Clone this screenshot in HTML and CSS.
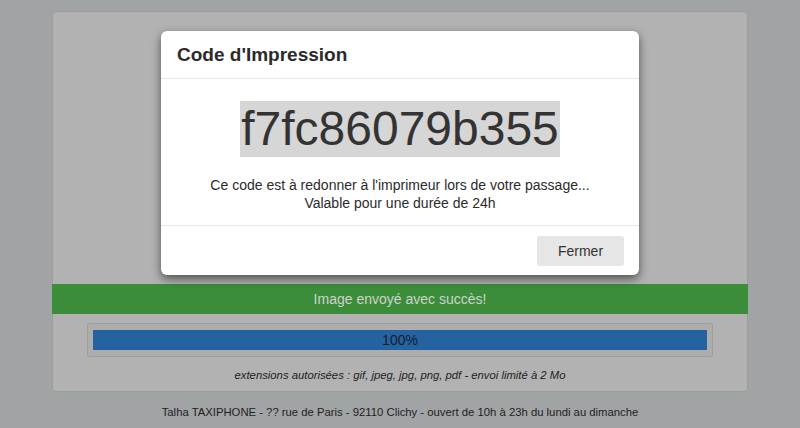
FILE: index.html
```html
<!DOCTYPE html>
<html lang="fr">
<head>
<meta charset="utf-8">
<title>Print2Net</title>
<link rel="stylesheet" href="styles.css">
</head>
<body>
<div class="page">
  <div class="card">
    <div class="card-top"></div>
    <div class="alert">Image envoyé avec succès!</div>
    <div class="progress">
      <div class="progress-bar">100%</div>
    </div>
    <p class="note">extensions autorisées : gif, jpeg, jpg, png, pdf - envoi limité à 2 Mo</p>
  </div>
  <p class="footer">Talha TAXIPHONE - ?? rue de Paris - 92110 Clichy - ouvert de 10h à 23h du lundi au dimanche</p>
</div>

<div class="modal">
  <div class="modal-header">
    <h4 class="modal-title">Code d'Impression</h4>
  </div>
  <div class="modal-body">
    <div class="code"><span class="code-sel">f7fc86079b355</span></div>
    <p class="desc">Ce code est à redonner à l'imprimeur lors de votre passage...<br>Valable pour une durée de 24h</p>
  </div>
  <div class="modal-footer">
    <button class="btn">Fermer</button>
  </div>
</div>
</body>
</html>
```

FILE: styles.css
```css
* { box-sizing: border-box; }
html, body { margin: 0; padding: 0; }
body {
  background: #a1a4a5;
  font-family: "Liberation Sans", Arial, sans-serif;
  color: #333;
  width: 800px;
  height: 428px;
  overflow: hidden;
}
.page {
  padding-top: 11px;
  display: flex;
  flex-direction: column;
  align-items: center;
}
.card {
  width: 696px;
  background: #b2b2b2;
  border: 1px solid #9d9d9d;
  border-radius: 4px;
  display: flex;
  flex-direction: column;
  align-items: center;
  padding-bottom: 8px;
}
.card-top { height: 272px; width: 100%; }
.alert {
  width: calc(100% + 2px);
  margin: 0 -1px;
  height: 30px;
  background: #3c8d3a;
  color: #cdd3cc;
  font-size: 14px;
  display: flex;
  align-items: center;
  justify-content: center;
}
.progress {
  margin-top: 9px;
  width: 626px;
  height: 34px;
  border: 1px solid #9f9f9f;
  border-radius: 3px;
  background: #adadad;
  padding: 6px 5px 6px 5px;
}
.progress-bar {
  height: 20px;
  background: #2463a0;
  color: #15202c;
  font-size: 14px;
  line-height: 20px;
  text-align: center;
}
.note {
  margin: 10px 0 0;
  font-size: 11.3px;
  font-style: italic;
  color: #1e1e1e;
  line-height: 16px;
}
.footer {
  margin: 12px 0 0;
  font-size: 11.3px;
  color: #1e1e1e;
  line-height: 16px;
}

.modal {
  position: absolute;
  left: 161px;
  top: 31px;
  width: 478px;
  height: 244px;
  background: #fff;
  border-radius: 6px;
  box-shadow: 0 4px 10px rgba(0,0,0,0.55);
  display: flex;
  flex-direction: column;
}
.modal-header {
  height: 48px;
  border-bottom: 1px solid #e5e5e5;
  padding: 0 16px;
  display: flex;
  align-items: center;
}
.modal-title {
  margin: 0;
  font-size: 19px;
  font-weight: bold;
  color: #2b2b2b;
}
.modal-body {
  height: 147px;
  border-bottom: 1px solid #e5e5e5;
  padding-top: 22px;
  text-align: center;
}
.code {
  font-size: 48px;
  line-height: 56px;
  height: 56px;
  color: #333;
}
.code-sel { background: #d6d6d6; padding: 0 1px; display: inline-block; }
.desc {
  margin: 19px 0 0;
  font-size: 14px;
  line-height: 18px;
  color: #2b2b2b;
}
.modal-footer {
  flex: 1;
  display: flex;
  justify-content: flex-end;
  align-items: flex-start;
  padding: 10px 15px 0 0;
}
.btn {
  width: 87px;
  height: 30px;
  border: none;
  border-radius: 3px;
  background: #e6e6e6;
  color: #333;
  font-family: "Liberation Sans", Arial, sans-serif;
  font-size: 14px;
}
```
